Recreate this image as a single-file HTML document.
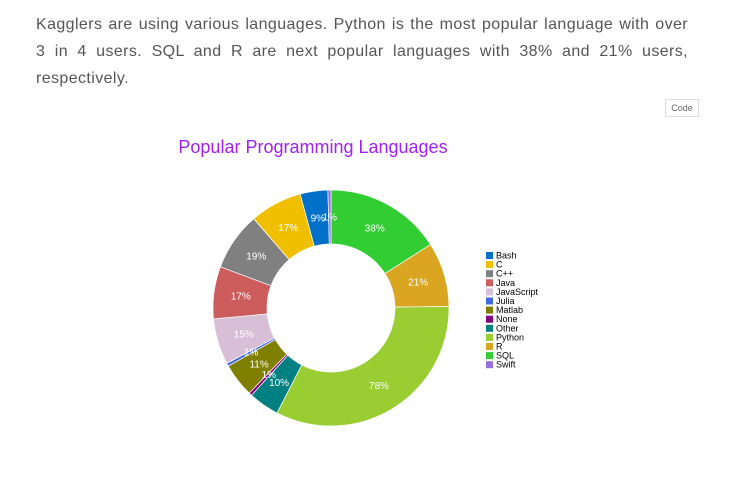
<!DOCTYPE html>
<html><head><meta charset="utf-8"><style>
html,body{margin:0;padding:0;background:#fff;width:734px;height:495px;overflow:hidden}
.t{position:absolute;left:36px;width:652px;margin:0;font-family:"Liberation Sans",sans-serif;font-size:16px;line-height:27px;color:#555;letter-spacing:0.4px;white-space:nowrap}
.j{text-align:justify;text-align-last:justify;white-space:normal}
.code{position:absolute;left:665px;top:99px;width:32px;height:16px;border:1px solid #ddd;font-family:"Liberation Sans",sans-serif;font-size:9px;color:#666;text-align:center;line-height:16px;box-sizing:content-box}
svg{position:absolute;left:0;top:0}
</style></head><body>
<div class="t j" style="top:11px">Kagglers are using various languages. Python is the most popular language with over</div>
<div class="t j" style="top:38px">3 in 4 users. SQL and R are next popular languages with 38% and 21% users,</div>
<div class="t" style="top:65px">respectively.</div>
<div class="code">Code</div>
<svg width="734" height="495" id="s" font-family="Liberation Sans, sans-serif">
<text x="313" y="153" text-anchor="middle" font-size="18" fill="#a020f0">Popular Programming Languages</text>
<g id="pie"></g>
<g id="leg" font-size="9" fill="#000"></g>
</svg>
<script>
var d=[["SQL",38,"#32cd32"],["R",21,"#daa520"],["Python",78,"#9acd32"],["Other",10,"#008080"],["None",1,"#800080"],["Matlab",11,"#808000"],["Julia",1,"#4169e1"],["JavaScript",15,"#d8bfd8"],["Java",17,"#cd5c5c"],["C++",19,"#808080"],["C",17,"#f0c000"],["Bash",9,"#0070c8"],["Swift",1,"#9370db"]];
var cx=331,cy=308,R=118,r=64,tot=0;d.forEach(function(e){tot+=e[1]});
var a=0,h="",t="";
function pt(rad,ang){return [cx+rad*Math.sin(ang),cy-rad*Math.cos(ang)]}
d.forEach(function(e){var a0=a,a1=a+e[1]/tot*2*Math.PI;a=a1;var l=(a1-a0)>Math.PI?1:0;
var p1=pt(R,a0),p2=pt(R,a1),p3=pt(r,a1),p4=pt(r,a0);
h+='<path d="M'+p1+'A'+R+','+R+' 0 '+l+' 1 '+p2+'L'+p3+'A'+r+','+r+' 0 '+l+' 0 '+p4+'Z" fill="'+e[2]+'" stroke="#fff" stroke-width="0.7"/>';
var m=pt(91,(a0+a1)/2);t+='<text x="'+m[0]+'" y="'+(m[1]+3.5)+'" text-anchor="middle" font-size="10" fill="#fff">'+e[1]+'%</text>';});
document.getElementById("pie").innerHTML=h+t;
var lg=["Bash","C","C++","Java","JavaScript","Julia","Matlab","None","Other","Python","R","SQL","Swift"],s="";
lg.forEach(function(n,i){var c;d.forEach(function(e){if(e[0]==n)c=e[2]});var y=252+i*9.1;
s+='<rect x="486" y="'+y+'" width="7" height="7" fill="'+c+'"/><text x="496" y="'+(y+6.5)+'">'+n+'</text>';});
document.getElementById("leg").innerHTML=s;
</script>
</body></html>
